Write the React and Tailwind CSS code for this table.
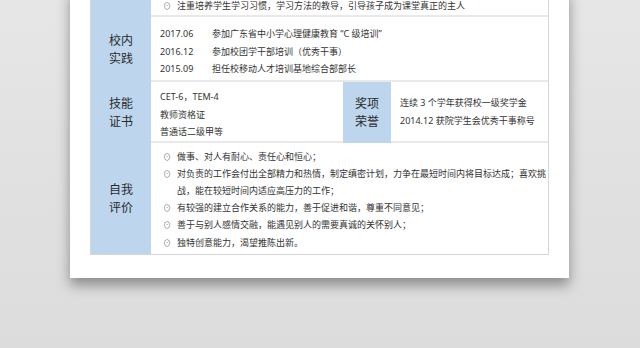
import React from "react";

const font = { fontFamily: '"Noto Sans", "Noto Sans CJK SC", sans-serif' };

function Bullet({ children }) {
  return (
    <div className="flex">
      <span className="w-[14px] shrink-0 text-[#777] text-[8px]">⊙</span>
      <span className="whitespace-nowrap">{children}</span>
    </div>
  );
}

function Label({ lines }) {
  return (
    <div className="w-[60px] shrink-0 bg-[#bdd6ee] flex flex-col items-center justify-center text-[12px] leading-[18px] text-[#2a2a2a]">
      {lines.map((l) => (
        <span key={l}>{l}</span>
      ))}
    </div>
  );
}

export default function App() {
  return (
    <div
      className="w-[640px] h-[348px] overflow-hidden bg-linear-to-b from-[#e6e6e6] to-[#dcdcdc]"
      style={font}
    >
      <div className="ml-[70px] w-[499px] -mt-[12px] bg-white pl-[20px] pr-[20px] pb-[23px] shadow-[0_7px_12px_rgba(0,0,0,0.38)]">
        <div className="border-l border-r border-b border-[#d6d6d6] text-[9px] text-[#333]">
          {/* Row 1 (partial) */}
          <div className="flex">
            <Label lines={[]} />
            <div className="flex-1 h-[29px] border-b-2 border-[#e9e9e9] pt-[9px] pl-[12px] leading-[17.5px]">
              <Bullet>注重培养学生学习习惯，学习方法的教导，引导孩子成为课堂真正的主人</Bullet>
            </div>
          </div>
          {/* Row 2 */}
          <div className="flex">
            <Label lines={["校内", "实践"]} />
            <div className="flex-1 h-[65px] border-b-2 border-[#e9e9e9] pt-[8px] pl-[9px] leading-[17.5px]">
              {[
                ["2017.06", "参加广东省中小学心理健康教育 “C 级培训”"],
                ["2016.12", "参加校团学干部培训（优秀干事）"],
                ["2015.09", "担任校移动人才培训基地综合部部长"],
              ].map(([d, t]) => (
                <div key={d} className="flex">
                  <span className="w-[52px] shrink-0">{d}</span>
                  <span className="whitespace-nowrap">{t}</span>
                </div>
              ))}
            </div>
          </div>
          {/* Row 3 */}
          <div className="flex">
            <Label lines={["技能", "证书"]} />
            <div className="w-[192px] shrink-0 h-[61px] border-b-2 border-[#e9e9e9] pt-[6px] pl-[9px] leading-[17.5px]">
              <div>CET-6，TEM-4</div>
              <div>教师资格证</div>
              <div>普通话二级甲等</div>
            </div>
            <div className="w-[48px] shrink-0 bg-[#bdd6ee] flex flex-col items-center justify-center text-[12px] leading-[18px] text-[#2a2a2a]">
              <span>奖项</span>
              <span>荣誉</span>
            </div>
            <div className="flex-1 h-[61px] border-b-2 border-[#e9e9e9] pl-[9px] flex flex-col justify-center leading-[18px]">
              <div>连续 3 个学年获得校一级奖学金</div>
              <div>2014.12 获院学生会优秀干事称号</div>
            </div>
          </div>
          {/* Row 4 */}
          <div className="flex">
            <Label lines={["自我", "评价"]} />
            <div className="flex-1 h-[111px] pt-[4.5px] pl-[12px] leading-[17.2px]">
              <Bullet>做事、对人有耐心、责任心和恒心；</Bullet>
              <Bullet>
                对负责的工作会付出全部精力和热情，制定缜密计划，力争在最短时间内将目标达成；喜欢挑
                <br />
                战，能在较短时间内适应高压力的工作；
              </Bullet>
              <Bullet>有较强的建立合作关系的能力，善于促进和谐，尊重不同意见；</Bullet>
              <Bullet>善于与别人感情交融，能遇见别人的需要真诚的关怀别人；</Bullet>
              <Bullet>独特创意能力，渴望推陈出新。</Bullet>
            </div>
          </div>
        </div>
      </div>
    </div>
  );
}
